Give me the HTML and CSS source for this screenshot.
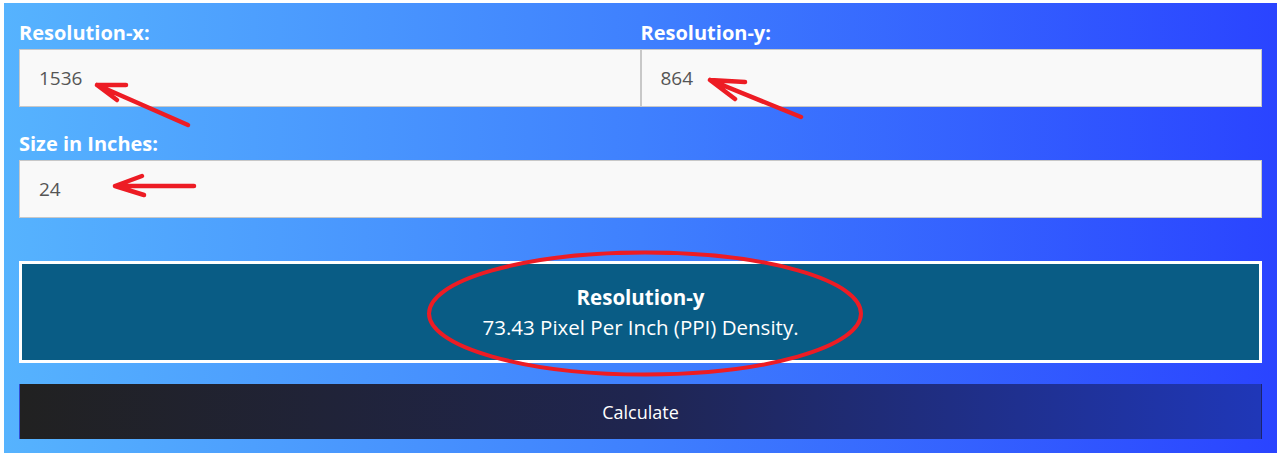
FILE: index.html
```html
<!DOCTYPE html>
<html lang="en">
<head>
    <meta charset="UTF-8">
    <meta name="viewport" content="width=device-width, initial-scale=1.0">
    <title>PPI Calculator</title>
    <link rel="stylesheet" href="styles.css">
</head>
<body>
    <div class="calculator">
        <div class="row-two">
            <div class="field">
                <label for="res-x">Resolution-x:</label>
                <input type="text" id="res-x" value="1536">
            </div>
            <div class="field">
                <label for="res-y">Resolution-y:</label>
                <input type="text" id="res-y" value="864">
            </div>
        </div>
        <div class="field field-size">
            <label for="size">Size in Inches:</label>
            <input type="text" id="size" value="24">
        </div>

        <div class="result">
            <strong>Resolution-y</strong>
            <span>73.43 Pixel Per Inch (PPI) Density.</span>
        </div>

        <button type="button" class="calc-btn">Calculate</button>

        <!-- annotations drawn over the screenshot -->
        <svg class="marks" width="1273" height="450" viewBox="4 3 1273 450">
            <g fill="none" stroke="#ed1c24" stroke-width="4.5" stroke-linecap="round" stroke-linejoin="round">
                <path d="M188 125 L97 85 M97 85 L126 85 M97 85 L117 100"/>
                <path d="M801 117 L710 80 M710 80 L745 82 M710 80 L735 99"/>
                <path d="M194 186 L115 186 M115 186 L142 176 M115 186 L144 195"/>
                <ellipse cx="645" cy="313.5" rx="216" ry="61" stroke-width="4"/>
            </g>
        </svg>
    </div>
</body>
</html>
```

FILE: styles.css
```css
body {
    margin: 3px 4px 5px 4px;
    font-family: "Open Sans", Arial, sans-serif;
    background-color: #fff;
}
.calculator {
    position: relative;
    padding: 17px 15px 14px 15px;
    background: linear-gradient(to right, #56b3fe 0%, #3f80fe 50%, #2a44ff 100%);
}
.row-two {
    display: grid;
    grid-template-columns: 1fr 1fr;
}
.field label {
    display: block;
    color: #fff;
    font-weight: bold;
    font-size: 20px;
    line-height: 26px;
    margin-bottom: 3px;
}
.field input {
    display: block;
    width: 100%;
    box-sizing: border-box;
    height: 58px;
    margin: 0;
    padding: 0 19px;
    border: 1px solid #c8c8c8;
    background-color: #f9f9f9;
    color: #555;
    font-family: "Open Sans", Arial, sans-serif;
    font-size: 19px;
    outline: none;
}
.field-size {
    margin-top: 24px;
}
.result {
    margin-top: 43px;
    height: 96px;
    border: 3px solid #fff;
    background-color: #095c85;
    color: #fff;
    display: flex;
    flex-direction: column;
    align-items: center;
    justify-content: center;
    font-size: 20.5px;
    line-height: 30px;
}
.result strong {
    font-weight: bold;
}
.calc-btn {
    display: block;
    width: 100%;
    height: 55px;
    margin-top: 21px;
    border: none;
    border-left: 1px solid #2e4fd8;
    border-right: 1px solid #1a2470;
    background: linear-gradient(to right, #212121 0%, #1f2550 50%, #1f37b8 100%);
    color: #fff;
    font-family: "Open Sans", Arial, sans-serif;
    font-size: 18px;
    cursor: pointer;
}
.marks {
    position: absolute;
    left: 0;
    top: 0;
    pointer-events: none;
}
```
